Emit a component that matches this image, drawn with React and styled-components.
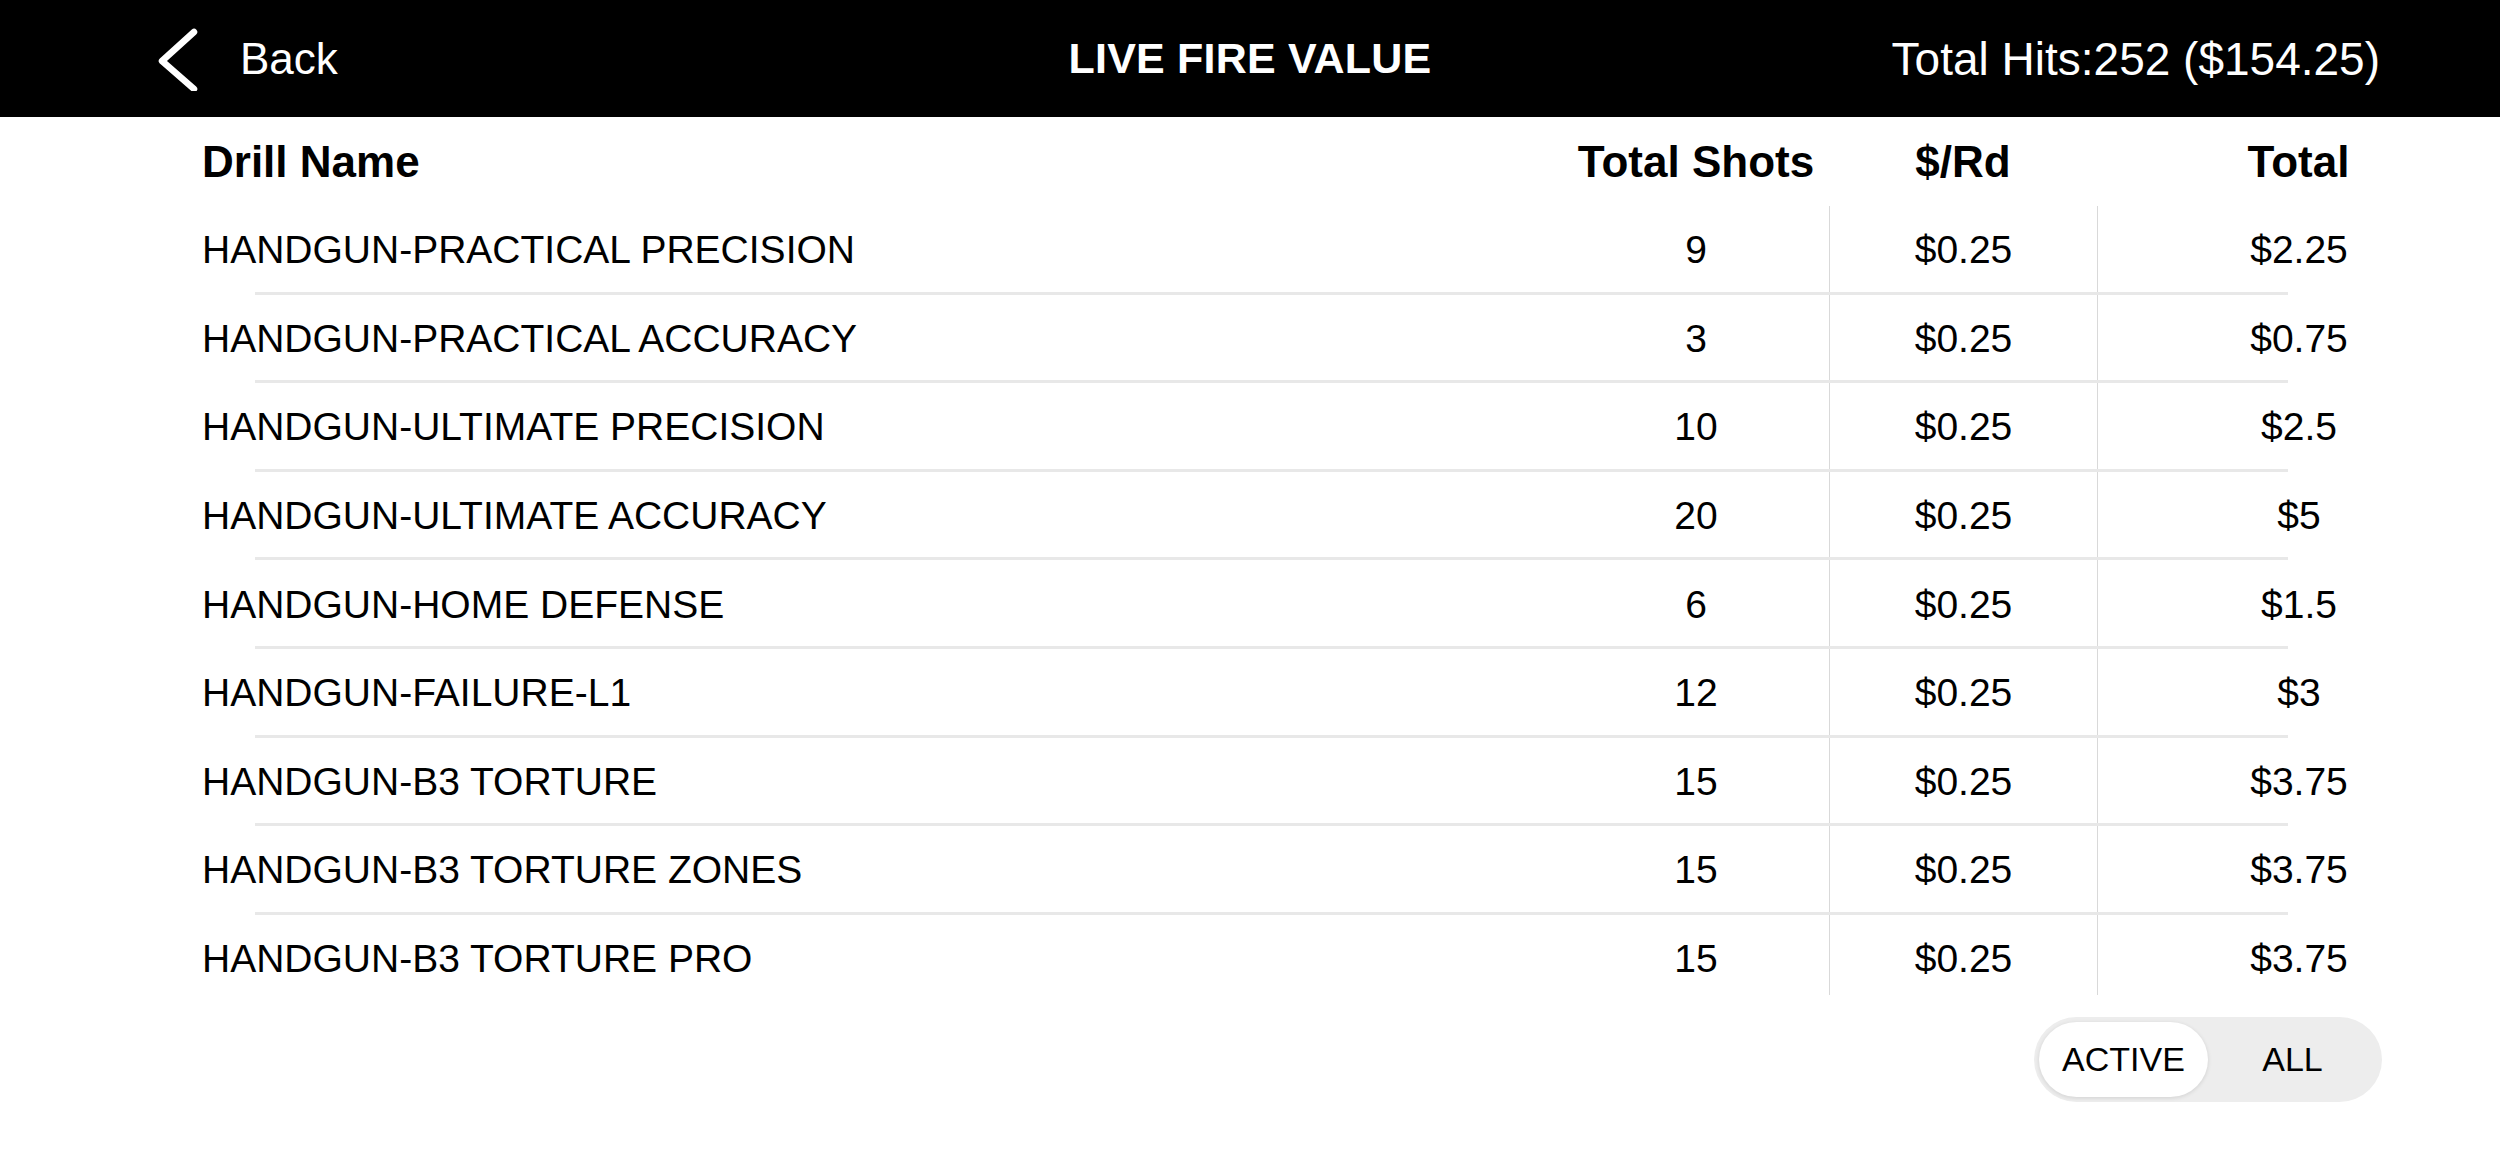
import React from 'react';
import styled, { createGlobalStyle } from 'styled-components';

const GlobalStyle = createGlobalStyle`
  html, body {
    margin: 0;
    padding: 0;
    background: #fff;
  }
  body {
    font-family: "Liberation Sans", Arial, sans-serif;
    color: #000;
  }
`;

const Page = styled.div`
  width: 2500px;
  height: 1153px;
  display: flex;
  flex-direction: column;
  background: #fff;
  overflow: hidden;
`;

const NavBar = styled.header`
  height: 117px;
  flex-shrink: 0;
  background: #000;
  color: #fff;
  display: grid;
  grid-template-columns: 1fr auto 1fr;
  align-items: center;
  padding: 0 120px;
`;

const BackButton = styled.button`
  display: flex;
  align-items: center;
  gap: 41px;
  margin-left: 35px;
  background: none;
  border: 0;
  padding: 0;
  color: #fff;
  font-family: inherit;
  font-size: 44px;
  cursor: pointer;
  justify-self: start;
`;

const Title = styled.h1`
  margin: 0;
  font-size: 43px;
  font-weight: 700;
  letter-spacing: 0.2px;
`;

const Summary = styled.div`
  justify-self: end;
  font-size: 46px;
`;

const Table = styled.div`
  display: flex;
  flex-direction: column;
`;

const Row = styled.div`
  position: relative;
  display: grid;
  grid-template-columns: 1361px 266px 268px 403px;
  padding-left: 202px;
  height: ${({ $head }) => ($head ? '89px' : '88.6px')};

  &::after {
    content: '';
    display: ${({ $divider }) => ($divider ? 'block' : 'none')};
    position: absolute;
    left: 255px;
    right: 212px;
    bottom: 0;
    height: 3px;
    background: #e8e8e8;
  }
`;

const Cell = styled.div`
  display: flex;
  align-items: center;
  justify-content: ${({ $align }) => ($align === 'left' ? 'flex-start' : 'center')};
  font-size: ${({ $head }) => ($head ? '44px' : '39px')};
  font-weight: ${({ $head }) => ($head ? 700 : 400)};
  border-left: ${({ $rule }) => ($rule ? '1px solid #d9d9d9' : 'none')};
  margin-bottom: ${({ $short }) => ($short ? '8px' : '0')};
  padding-top: ${({ $short }) => ($short ? '8px' : '0')};
  white-space: nowrap;
`;

const Footer = styled.div`
  display: flex;
  justify-content: flex-end;
  padding: 14px 118px 0 0;
`;

const Toggle = styled.div`
  display: flex;
  width: 348px;
  height: 85px;
  box-sizing: border-box;
  padding: 5px;
  border-radius: 43px;
  background: #ededed;
`;

const ToggleOption = styled.button`
  flex: 1;
  border: 0;
  border-radius: 38px;
  font-family: inherit;
  font-size: 34px;
  color: #000;
  background: ${({ $on }) => ($on ? '#fff' : 'transparent')};
  box-shadow: ${({ $on }) => ($on ? '0 1px 4px rgba(0,0,0,0.12)' : 'none')};
  padding: 0;
  cursor: pointer;
`;

const drills = [
  ['HANDGUN-PRACTICAL PRECISION', 9, '$0.25', '$2.25'],
  ['HANDGUN-PRACTICAL ACCURACY', 3, '$0.25', '$0.75'],
  ['HANDGUN-ULTIMATE PRECISION', 10, '$0.25', '$2.5'],
  ['HANDGUN-ULTIMATE ACCURACY', 20, '$0.25', '$5'],
  ['HANDGUN-HOME DEFENSE', 6, '$0.25', '$1.5'],
  ['HANDGUN-FAILURE-L1', 12, '$0.25', '$3'],
  ['HANDGUN-B3 TORTURE', 15, '$0.25', '$3.75'],
  ['HANDGUN-B3 TORTURE ZONES', 15, '$0.25', '$3.75'],
  ['HANDGUN-B3 TORTURE PRO', 15, '$0.25', '$3.75'],
];

const Chevron = () => (
  <svg width="44" height="64" viewBox="0 0 44 64" fill="none">
    <path d="M39 5 L7 34 L39 62" stroke="#fff" strokeWidth="6.5" strokeLinecap="round" strokeLinejoin="round" />
  </svg>
);

const App = () => {
  return (
    <Page>
      <GlobalStyle />
      <NavBar>
        <BackButton>
          <Chevron />
          Back
        </BackButton>
        <Title>LIVE FIRE VALUE</Title>
        <Summary>Total Hits:252 ($154.25)</Summary>
      </NavBar>

      <Table>
        <Row $head>
          <Cell $head $align="left">Drill Name</Cell>
          <Cell $head>Total Shots</Cell>
          <Cell $head>$/Rd</Cell>
          <Cell $head>Total</Cell>
        </Row>
        {drills.map(([name, shots, rate, total], i) => {
          const last = i === drills.length - 1;
          return (
            <Row key={name} $divider={!last}>
              <Cell $align="left" $short={last}>{name}</Cell>
              <Cell $short={last}>{shots}</Cell>
              <Cell $rule $short={last}>{rate}</Cell>
              <Cell $rule $short={last}>{total}</Cell>
            </Row>
          );
        })}
      </Table>

      <Footer>
        <Toggle>
          <ToggleOption $on>ACTIVE</ToggleOption>
          <ToggleOption>ALL</ToggleOption>
        </Toggle>
      </Footer>
    </Page>
  );
};

export default App;
